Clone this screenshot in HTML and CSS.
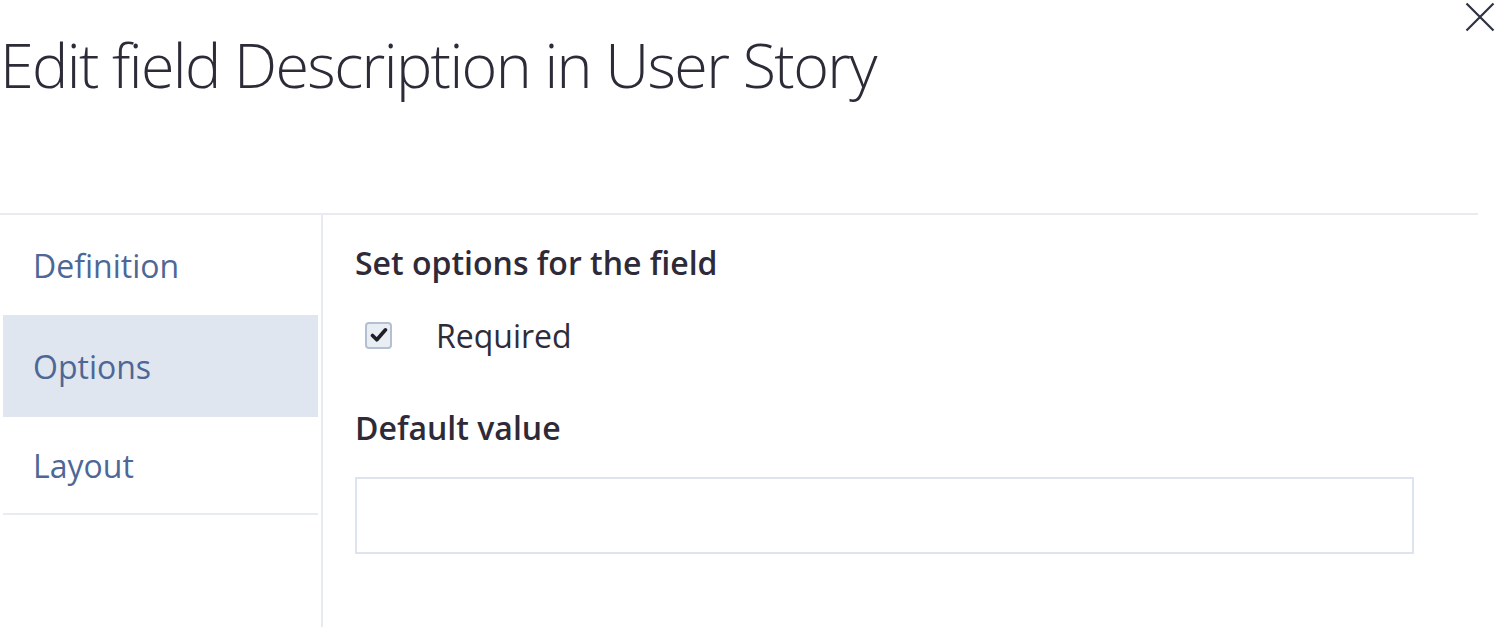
FILE: index.html
```html
<!DOCTYPE html>
<html>
<head>
<meta charset="utf-8">
<link rel="stylesheet" href="styles.css">
</head>
<body>
<div class="dialog">
  <button class="close" aria-label="Close">
    <svg width="30" height="30" viewBox="0 0 30 30"><path d="M1.5 1.5 L28.5 28.5 M28.5 1.5 L1.5 28.5" stroke="#2d3140" stroke-width="2.2" fill="none"/></svg>
  </button>
  <h1 class="title">Edit field Description in User Story</h1>
  <div class="panel">
    <nav class="nav">
      <div class="nav-item">Definition</div>
      <div class="nav-item active">Options</div>
      <div class="nav-item last">Layout</div>
    </nav>
    <main class="content">
      <h2 class="section">Set options for the field</h2>
      <label class="check-row">
        <span class="checkbox"><svg width="18" height="16" viewBox="0 0 18 16"><path d="M2.5 8.5 L6.8 12.8 L15.5 2.8" stroke="#1f1f28" stroke-width="3.6" fill="none" stroke-linecap="round" stroke-linejoin="round"/></svg></span>
        <span class="check-label">Required</span>
      </label>
      <h2 class="section default">Default value</h2>
      <div class="input"></div>
    </main>
  </div>
</div>
</body>
</html>
```
FILE: styles.css
```css
html, body {
  margin: 0;
  padding: 0;
  background: #ffffff;
}
body {
  font-family: "Open Sans", "Noto Sans", sans-serif;
  color: #2f2c3a;
  width: 1500px;
  height: 627px;
  overflow: hidden;
}
.dialog {
  position: relative;
  height: 627px;
}
.close {
  position: absolute;
  top: 1px;
  right: 4px;
  width: 32px;
  height: 32px;
  padding: 0;
  border: 0;
  background: transparent;
  display: flex;
  align-items: center;
  justify-content: center;
}
.title {
  margin: 0;
  padding: 20px 0 0 0;
  height: 213px;
  box-sizing: border-box;
  font-weight: 300;
  font-size: 61px;
  line-height: 90px;
  color: #2d2b38;
  letter-spacing: -1.6px;
}
.panel {
  display: flex;
  margin-right: 22px;
  border-top: 2px solid #e8ecf2;
  height: 412px;
}
.nav {
  width: 323px;
  padding-left: 3px;
  box-sizing: border-box;
  border-right: 2px solid #e6ebf2;
  display: flex;
  flex-direction: column;
}
.nav-item {
  height: 100px;
  box-sizing: border-box;
  display: flex;
  align-items: center;
  padding-left: 30px;
  font-size: 32px;
  color: #4e6796;
  margin-right: 3px;
}
.nav-item.active {
  height: 102px;
  background: #dfe6ef;
}
.nav-item.last {
  height: 98px;
  border-bottom: 2px solid #e8ecf2;
}
.content {
  flex: 1;
  padding: 26px 0 0 32px;
}
.section {
  margin: 0;
  font-size: 32px;
  font-weight: 600;
  line-height: 44px;
  color: #2e2a38;
}
.check-row {
  display: flex;
  align-items: center;
  height: 100px;
  margin-left: 10px;
}
.checkbox {
  width: 23px;
  height: 23px;
  border: 2px solid #b4bfd2;
  border-radius: 4px;
  background: #e9edf4;
  display: flex;
  align-items: center;
  justify-content: center;
}
.check-label {
  margin-left: 44px;
  font-size: 32px;
  color: #2f2c3a;
}
.section.default {
  margin-top: 21px;
}
.input {
  margin-top: 27px;
  width: 1055px;
  height: 73px;
  border: 2px solid #dde4ee;
}
```
